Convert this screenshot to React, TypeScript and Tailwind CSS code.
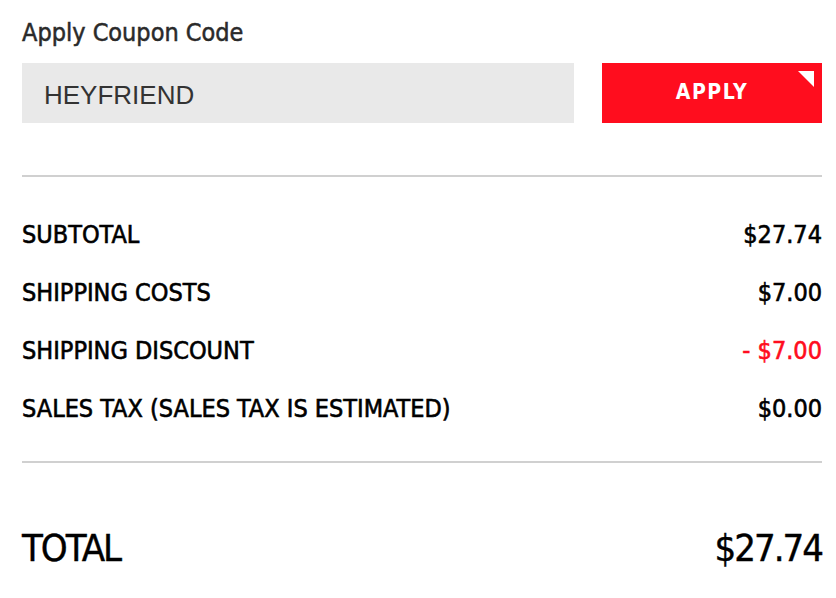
import React from "react";

const din = { fontFamily: '"DejaVu Sans Condensed", "DejaVu Sans", Roboto, sans-serif' };

function Row({ label, value, red }: { label: string; value: string; red?: boolean }) {
  return (
    <div className="flex h-[58px] items-center justify-between text-[25px] leading-none [-webkit-text-stroke:0.6px]">
      <span className="text-black">{label}</span>
      <span className={red ? "text-[#ff0d1e]" : "text-black"}>{value}</span>
    </div>
  );
}

export default function App() {
  return (
    <div className="w-[836px] h-[598px] bg-white pl-[22px] pr-[14px] pt-[18px]" style={din}>
      <div className="text-[25px] leading-[30px] text-[#2a2a2a] [-webkit-text-stroke:0.5px]">Apply Coupon Code</div>
      <div className="mt-[15px] flex h-[60px] gap-[28px]">
        <div className="flex flex-1 items-center bg-[#e9e9e9] pl-[22px] pt-[4px]">
          <span className="text-[26px] text-[#333]" style={{ fontFamily: '"Liberation Sans", Arial, sans-serif' }}>
            HEYFRIEND
          </span>
        </div>
        <button className="relative flex w-[220px] items-center justify-center bg-[#ff0d1e] text-[21px] font-bold tracking-[1.5px] text-white">
          APPLY
          <svg className="absolute right-[8px] top-[8px]" width="16" height="16" viewBox="0 0 16 16">
            <polygon points="0,0 16,0 16,16" fill="#fff" />
          </svg>
        </button>
      </div>
      <div className="mt-[52px] h-[2px] bg-[#d0d0d0]" />
      <div className="pt-[28px] pb-[24px]">
        <Row label="SUBTOTAL" value="$27.74" />
        <Row label="SHIPPING COSTS" value="$7.00" />
        <Row label="SHIPPING DISCOUNT" value="- $7.00" red />
        <Row label="SALES TAX (SALES TAX IS ESTIMATED)" value="$0.00" />
      </div>
      <div className="h-[2px] bg-[#d0d0d0]" />
      <div className="mt-[66px] flex items-center justify-between text-[38px] leading-none tracking-[-2px] text-black [-webkit-text-stroke:0.4px]">
        <span>TOTAL</span>
        <span>$27.74</span>
      </div>
    </div>
  );
}
